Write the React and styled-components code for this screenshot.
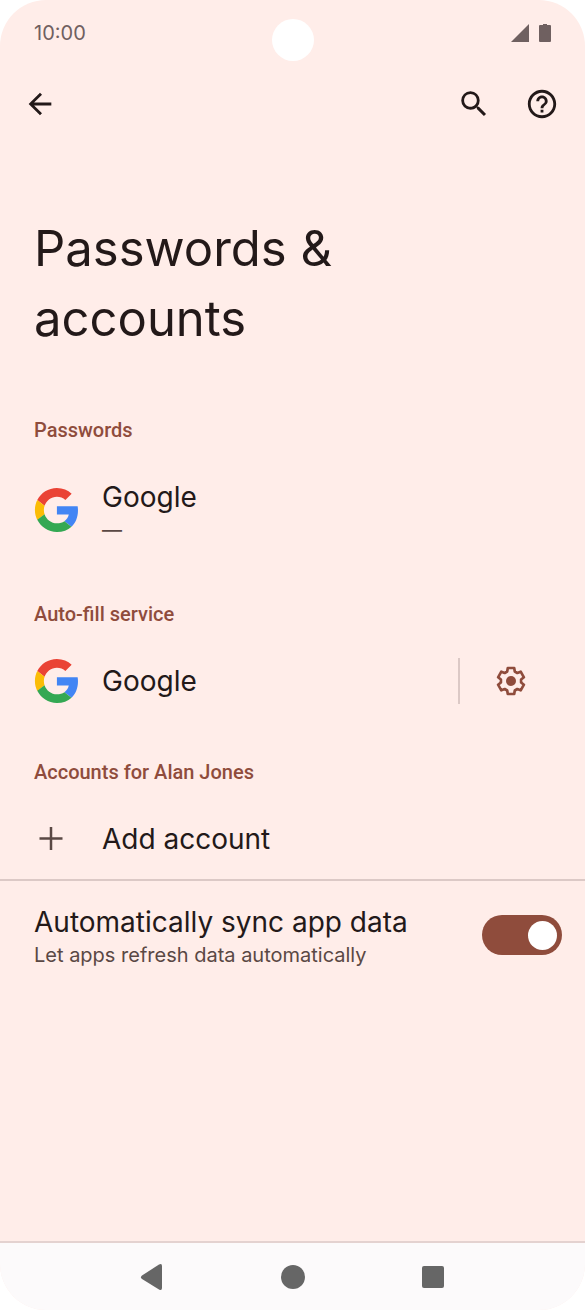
import React, { useState } from 'react';
import styled, { createGlobalStyle } from 'styled-components'
import { MdArrowBack, MdSearch, MdHelpOutline } from 'react-icons/md'

const GlobalStyle = createGlobalStyle`
  * { box-sizing: border-box; }
  body {
    margin: 0;
    background: #ffffff;
  }
`

const Screen = styled.div`
  position: relative;
  display: flex;
  flex-direction: column;
  min-height: 100vh;
  border-radius: 46px;
  overflow: hidden;
  background: #ffede9;
  color: #231919;
  font-family: Inter, 'Liberation Sans', sans-serif;
`

const StatusBar = styled.div`
  display: flex;
  align-items: center;
  justify-content: space-between;
  height: 66px;
  padding: 0 34px;
  color: #6f6060;
  font-size: 20px;
`

const StatusIcons = styled.div`
  display: flex;
  align-items: center;
  gap: 10px;
`

// camera cut-out, sits on top of the status bar
const Camera = styled.div`
  position: absolute;
  top: 19px;
  left: 50%;
  width: 42px;
  height: 42px;
  margin-left: -21px;
  border-radius: 50%;
  background: #ffffff;
`

const Toolbar = styled.header`
  display: flex;
  align-items: center;
  gap: 32px;
  height: 76px;
  padding: 0 25px 0 22px;
`

const Spacer = styled.div`
  flex: 1;
`

const IconButton = styled.button`
  display: flex;
  align-items: center;
  justify-content: center;
  flex: none;
  width: 36px;
  height: 36px;
  padding: 0;
  border: 0;
  background: none;
  color: ${props => props.$color || '#231919'};
  cursor: pointer;
`

const Title = styled.h1`
  max-width: 400px;
  margin: 72px 34px 49px;
  font-size: 49px;
  font-weight: 400;
  line-height: 70px;
`

const SectionLabel = styled.h2`
  margin: 0;
  padding: 0 34px;
  color: #8f4c3c;
  font-family: Roboto, 'Liberation Sans', sans-serif;
  font-size: 20px;
  font-weight: 500;
  line-height: 54px;
`

const Row = styled.div`
  display: flex;
  align-items: center;
  height: ${props => props.$height};
  margin-bottom: ${props => (props.$last ? '0' : '24px')};
  padding-right: 56px;
`

const RowButton = styled.button`
  display: flex;
  align-items: center;
  flex: 1;
  height: 100%;
  padding: 0 0 0 34px;
  border: 0;
  background: none;
  color: inherit;
  font-family: inherit;
  text-align: left;
  cursor: pointer;
`

const RowIcon = styled.span`
  display: flex;
  width: 68px;
`

const RowText = styled.span`
  display: flex;
  flex-direction: column;
  padding-top: 4px;
`

const RowTitle = styled.span`
  font-size: 28px;
  line-height: 36px;
`

const RowNote = styled.span`
  color: #5a4844;
  font-size: 20px;
  line-height: 30px;
`

const Separator = styled.span`
  width: 2px;
  height: 46px;
  margin-right: 33px;
  background: #dcc9c6;
`

const SyncRow = styled.label`
  display: flex;
  align-items: center;
  justify-content: space-between;
  height: 110px;
  padding: 0 23px 0 34px;
  border-top: 2px solid #dcc9c6;
  cursor: pointer;
`

const Toggle = styled.input`
  appearance: none;
  display: flex;
  align-items: center;
  flex: none;
  width: 80px;
  height: 40px;
  margin: 0;
  padding: 0 5px;
  border-radius: 20px;
  background: ${props => (props.checked ? '#8f4c3c' : '#cbb6b1')};
  cursor: pointer;

  &::before {
    content: '';
    width: 29px;
    height: 29px;
    margin-left: ${props => (props.checked ? 'auto' : '0')};
    border-radius: 50%;
    background: #ffffff;
  }
`

const NavBar = styled.nav`
  display: flex;
  align-items: center;
  justify-content: center;
  gap: 104px;
  height: 69px;
  margin-top: auto;
  border-top: 2px solid #e4d2d0;
  background: #fcfafb;
`

const GoogleLogo = () => (
  <svg width="44" height="44" viewBox="-1 0 48 48" aria-hidden="true">
    <path fill="#ea4335" d="M24 9.5c3.54 0 6.71 1.22 9.21 3.6l6.85-6.85C35.9 2.38 30.47 0 24 0 14.62 0 6.51 5.38 2.56 13.22l7.98 6.19C12.43 13.72 17.74 9.5 24 9.5z" />
    <path fill="#4285f4" d="M46.98 24.55c0-1.57-.15-3.09-.38-4.55H24v9.02h12.94c-.58 2.96-2.26 5.48-4.78 7.18l7.73 6c4.51-4.18 7.09-10.36 7.09-17.65z" />
    <path fill="#fbbc05" d="M10.53 28.59c-.48-1.45-.76-2.99-.76-4.59s.27-3.14.76-4.59l-7.98-6.19C.92 16.46 0 20.12 0 24c0 3.88.92 7.54 2.56 10.78l7.97-6.19z" />
    <path fill="#34a853" d="M24 48c6.48 0 11.93-2.13 15.89-5.81l-7.73-6c-2.15 1.45-4.92 2.3-8.16 2.3-6.26 0-11.57-4.22-13.47-9.91l-7.98 6.19C6.51 42.62 14.62 48 24 48z" />
  </svg>
)

const Gear = () => (
  <svg width="36" height="36" viewBox="0 0 36 36" fill="none" stroke="currentColor" strokeWidth="2.7" strokeLinejoin="round">
    <path d="M14.2 8.500L14.800 5H21.200L21.800 8.500L24.300 10L27.700 8.700L30.900 14.300L28.100 16.500V19.500L30.900 21.700L27.700 27.300L24.300 26L21.800 27.500L21.200 31H14.800L14.200 27.500L11.700 26L8.300 27.300L5.100 21.700L7.900 19.500V16.500L5.100 14.300L8.300 8.700L11.700 10z" />
    <circle cx="18" cy="18" r="5" fill="currentColor" stroke="none" />
  </svg>
)

const App = () => {
  const [sync, setSync] = useState(true)

  return (
    <Screen>
      <GlobalStyle />
      <StatusBar>
        <span>10:00</span>
        <StatusIcons>
          <svg width="18" height="18" viewBox="0 0 18 18" fill="currentColor" aria-hidden="true">
            <path d="M18 0v18H0z" />
          </svg>
          <svg width="12" height="18" viewBox="0 0 12 18" fill="currentColor" aria-hidden="true">
            <path d="M4 0h4v1h3q1 0 1 1v15q0 1-1 1H1q-1 0-1-1V2q0-1 1-1h3z" />
          </svg>
        </StatusIcons>
      </StatusBar>
      <Camera />

      <Toolbar>
        <IconButton aria-label="Back"><MdArrowBack size={34} /></IconButton>
        <Spacer />
        <IconButton aria-label="Search"><MdSearch size={34} /></IconButton>
        <IconButton aria-label="Help"><MdHelpOutline size={34} /></IconButton>
      </Toolbar>

      <main>
        <Title>Passwords &amp; accounts</Title>

        <SectionLabel>Passwords</SectionLabel>
        <Row $height="106px">
          <RowButton>
            <RowIcon><GoogleLogo /></RowIcon>
            <RowText>
              <RowTitle>Google</RowTitle>
              <RowNote>—</RowNote>
            </RowText>
          </RowButton>
        </Row>

        <SectionLabel>Auto-fill service</SectionLabel>
        <Row $height="80px">
          <RowButton>
            <RowIcon><GoogleLogo /></RowIcon>
            <RowTitle>Google</RowTitle>
          </RowButton>
          <Separator />
          <IconButton $color="#8f4c3c" aria-label="Auto-fill settings"><Gear /></IconButton>
        </Row>

        <SectionLabel>Accounts for Alan Jones</SectionLabel>
        <Row $height="80px" $last>
          <RowButton>
            <RowIcon>
              <svg width="34" height="34" viewBox="0 0 34 34" fill="none" stroke="#5a4844" strokeWidth="2.5" aria-hidden="true">
                <path d="M17 5v23M5.500 16.500h23" />
              </svg>
            </RowIcon>
            <RowTitle>Add account</RowTitle>
          </RowButton>
        </Row>

        <SyncRow>
          <RowText>
            <RowTitle>Automatically sync app data</RowTitle>
            <RowNote>Let apps refresh data automatically</RowNote>
          </RowText>
          <Toggle type="checkbox" role="switch" checked={sync} onChange={e => setSync(e.target.checked)} />
        </SyncRow>
      </main>

      <NavBar>
        <IconButton $color="#666666" aria-label="Navigate back">
          <svg width="36" height="36" viewBox="0 0 36 36" fill="currentColor">
            <path d="M7 16.500L24 5.500q3-1.500 3 1.500v22q0 3-3 1.500L7 20q-2-2 0-3.500z" />
          </svg>
        </IconButton>
        <IconButton $color="#666666" aria-label="Home">
          <svg width="36" height="36" viewBox="0 0 36 36" fill="currentColor">
            <circle cx="18" cy="18" r="12" />
          </svg>
        </IconButton>
        <IconButton $color="#666666" aria-label="Recent apps">
          <svg width="36" height="36" viewBox="0 0 36 36" fill="currentColor">
            <rect x="7" y="7" width="22" height="22" rx="2" />
          </svg>
        </IconButton>
      </NavBar>
    </Screen>
  )
}

export default App;
